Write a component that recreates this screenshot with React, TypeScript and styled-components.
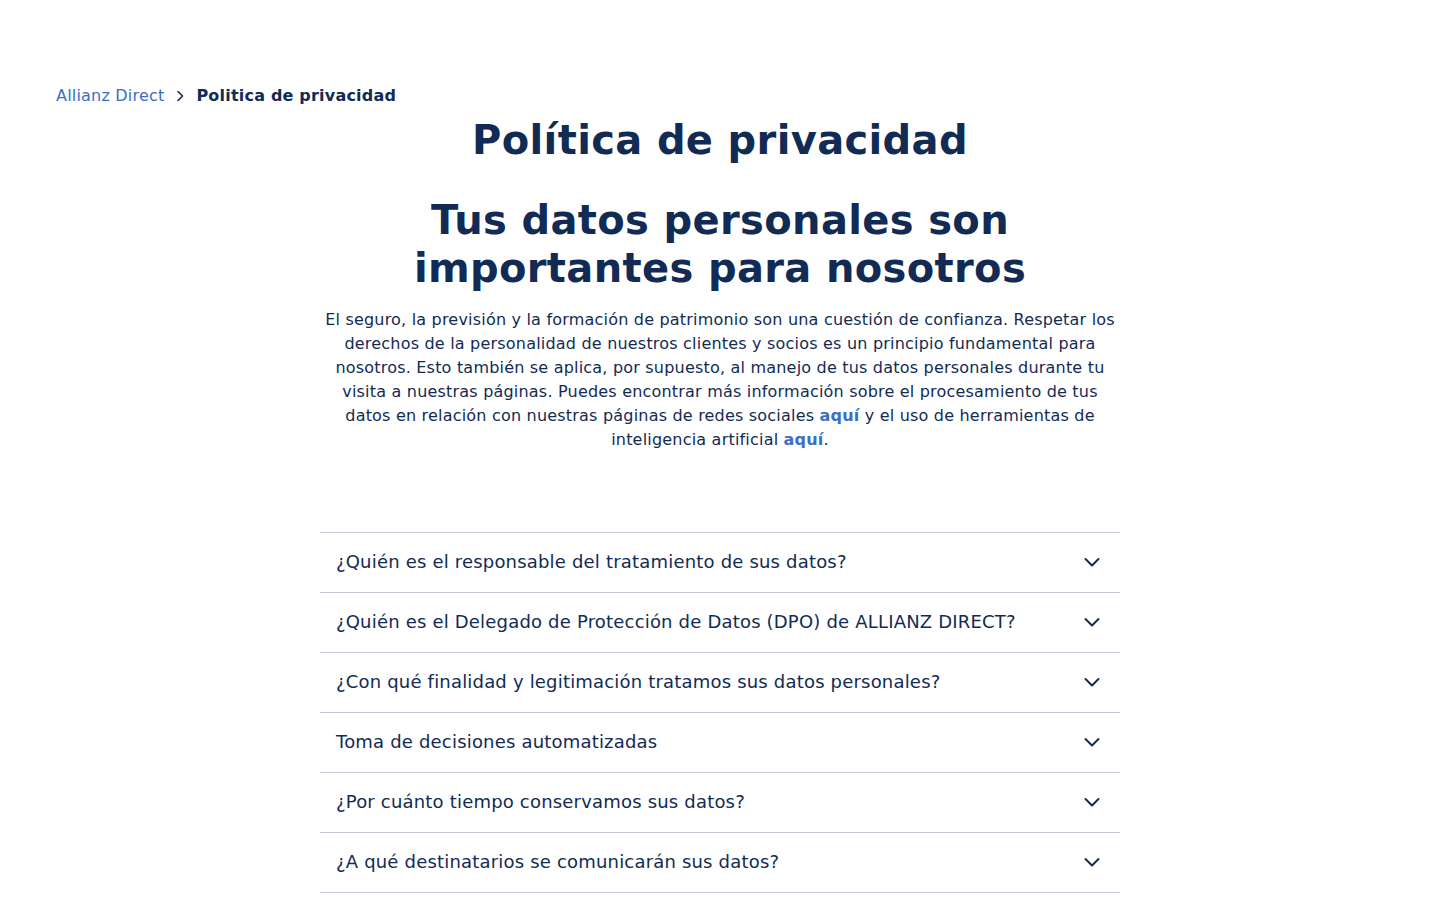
import React from "react";
import styled, { createGlobalStyle } from "styled-components";

const GlobalStyle = createGlobalStyle`
  * { box-sizing: border-box; }
  body {
    margin: 0;
    background: #ffffff;
    font-family: "DejaVu Sans", "Noto Sans", sans-serif;
    color: #122b54;
  }
`;

const Page = styled.div`
  display: flex;
  flex-direction: column;
  padding: 84px 56px 0;
`;

const Breadcrumb = styled.nav`
  display: flex;
  align-items: center;
  gap: 11px;
  font-size: 16px;
  line-height: 24px;
  letter-spacing: 0.2px;
`;

const Crumb = styled.a`
  color: #3a6fc4;
  text-decoration: none;
`;

const Current = styled.span`
  font-weight: 700;
  color: #122b54;
`;

const Content = styled.main`
  width: 800px;
  margin: 8px auto 0;
  display: flex;
  flex-direction: column;
  align-items: stretch;
  text-align: center;
`;

const Title = styled.h1`
  margin: 0;
  font-size: 40px;
  line-height: 48px;
  font-weight: 700;
  letter-spacing: 0.35px;
  color: #122b54;
`;

const Subtitle = styled.h2`
  margin: 32px 0 0;
  font-size: 40px;
  line-height: 48px;
  font-weight: 700;
  letter-spacing: 0.35px;
  color: #122b54;
`;

const Intro = styled.p`
  margin: 16px 0 0;
  font-size: 16px;
  line-height: 24px;
  letter-spacing: 0.2px;
  color: #122b54;
`;

const Link = styled.a`
  color: #3a6fc4;
  font-weight: 700;
  text-decoration: none;
`;

const Accordion = styled.section`
  margin-top: 80px;
  display: flex;
  flex-direction: column;
  text-align: left;
  border-bottom: 1px solid #c3c3dc;
`;

const Item = styled.button`
  display: flex;
  align-items: center;
  justify-content: space-between;
  height: 60px;
  width: 100%;
  padding: 0 19px 2px 16px;
  background: transparent;
  border: 0;
  border-top: 1px solid #c3c3dc;
  font-family: inherit;
  font-size: 18px;
  letter-spacing: 0.19px;
  color: #122b54;
  text-align: left;
  cursor: pointer;
`;

const Chevron = () => (
  <svg width="18" height="18" viewBox="0 0 18 18" fill="none">
    <path d="M2.5 6 L9 12.5 L15.5 6" stroke="#122b54" strokeWidth="2" strokeLinecap="round" strokeLinejoin="round" />
  </svg>
);

const CrumbChevron = () => (
  <svg width="10" height="12" viewBox="0 0 10 12" fill="none">
    <path d="M3 1.5 L7.5 6 L3 10.5" stroke="#122b54" strokeWidth="1.6" strokeLinecap="round" strokeLinejoin="round" />
  </svg>
);

const questions = [
  "¿Quién es el responsable del tratamiento de sus datos?",
  "¿Quién es el Delegado de Protección de Datos (DPO) de ALLIANZ DIRECT?",
  "¿Con qué finalidad y legitimación tratamos sus datos personales?",
  "Toma de decisiones automatizadas",
  "¿Por cuánto tiempo conservamos sus datos?",
  "¿A qué destinatarios se comunicarán sus datos?",
];

export default function App() {
  return (
    <>
      <GlobalStyle />
      <Page>
        <Breadcrumb>
          <Crumb href="#">Allianz Direct</Crumb>
          <CrumbChevron />
          <Current>Politica de privacidad</Current>
        </Breadcrumb>
        <Content>
          <Title>Política de privacidad</Title>
          <Subtitle>
            Tus datos personales son
            <br />
            importantes para nosotros
          </Subtitle>
          <Intro>
            El seguro, la previsión y la formación de patrimonio son una cuestión de confianza. Respetar los
            derechos de la personalidad de nuestros clientes y socios es un principio fundamental para
            nosotros. Esto también se aplica, por supuesto, al manejo de tus datos personales durante tu
            visita a nuestras páginas. Puedes encontrar más información sobre el procesamiento de tus
            datos en relación con nuestras páginas de redes sociales <Link href="#">aquí</Link> y el uso de herramientas de
            inteligencia artificial <Link href="#">aquí</Link>.
          </Intro>
          <Accordion>
            {questions.map((q) => (
              <Item key={q} type="button">
                <span>{q}</span>
                <Chevron />
              </Item>
            ))}
          </Accordion>
        </Content>
      </Page>
    </>
  );
}
